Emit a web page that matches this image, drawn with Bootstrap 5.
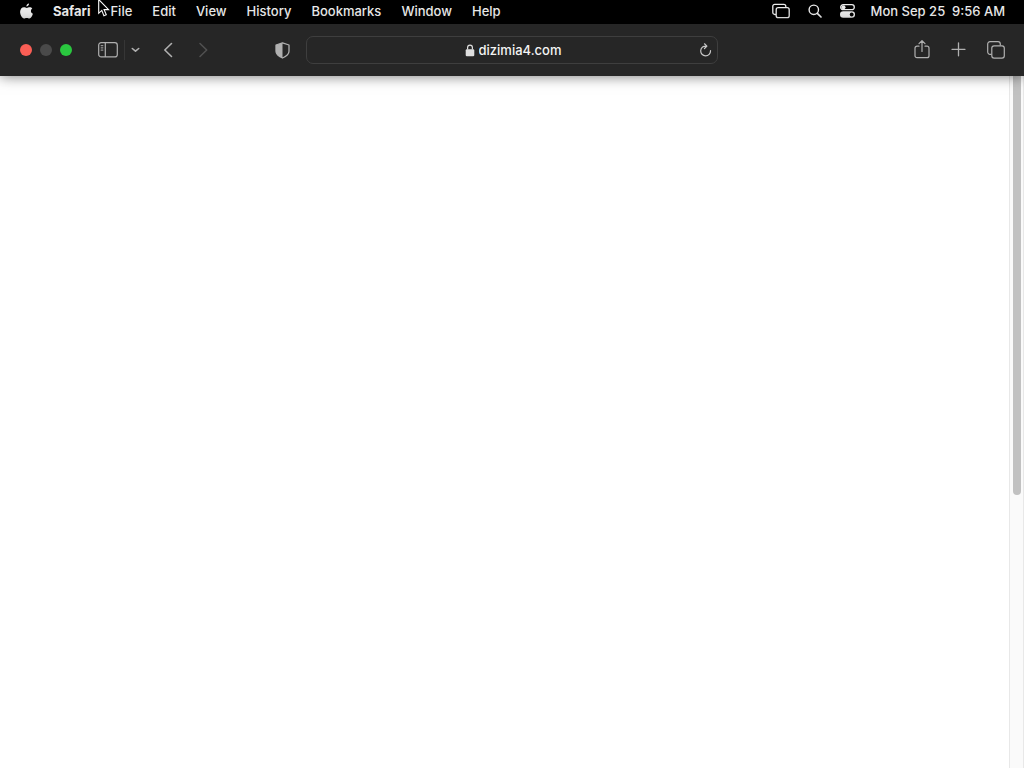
<!DOCTYPE html>
<html lang="en">
<head>
<meta charset="utf-8">
<meta name="viewport" content="width=device-width, initial-scale=1">
<title>Safari</title>
<link href="https://cdn.jsdelivr.net/npm/bootstrap@5.3.0/dist/css/bootstrap.min.css" rel="stylesheet">
<script src="https://cdn.jsdelivr.net/npm/bootstrap@5.3.0/dist/js/bootstrap.bundle.min.js" defer></script>
<style>
  body { font-family: Inter, "Liberation Sans", sans-serif; font-size: 13px; line-height: 16px; font-weight: 500; }
  svg { display: block; fill: none; flex: none; }
  .menubar { height: 24px; background: #000; color: #ececec; padding: 0 19px 2px 20px; }
  .menubar a, .menubar button { color: inherit; text-decoration: none; }
  .menus { gap: 20px; }
  .status { gap: 18px; }
  .plain { border: 0; background: none; padding: 0; color: inherit; }
  .toolbar { display: grid; grid-template-columns: 1fr minmax(0, 412px) 1fr; height: 52px; background: #262626; color: #b0b0b0; padding: 0 19px; box-shadow: 0 0 13px rgba(0, 0, 0, .55); z-index: 1; }
  .light { width: 12px; height: 12px; border-radius: 50%; }
  .lights { margin-left: 1px; }
  .light-close { background: #fa5e55; }
  .light-min { background: #4a4a4a; }
  .light-zoom { background: #2ac73f; }
  .side { gap: 6px; margin-left: 26px; }
  .rule { width: 1px; height: 20px; background: #363636; }
  .arrows { gap: 25px; margin-left: 23px; }
  .dim { color: #505050; }
  .privacy { margin-right: 16px; }
  .address { height: 28px; border: 1px solid #3e3e3e; border-radius: 7px; color: #f4f4f4; padding: 0 5px; }
  .url { width: 84px; padding: 0; border: 0; background: none; color: inherit; font: inherit; outline: 0; }
  .lock { margin-left: 16px; }
  .actions { gap: 21px; }
  .track { width: 15px; background: #fafafa; border: solid #e8e8e8; border-width: 0 1px; padding: 0 2px 0 3px; }
  .thumb { height: 60.5%; background: #c1c1c1; border-radius: 0 0 4px 4px; }
  .pointer { left: 98px; top: 0; }
</style>
</head>
<body class="d-flex flex-column vh-100 overflow-hidden bg-white">
  <header class="menubar d-flex align-items-center justify-content-between position-relative">
    <nav class="menus d-flex align-items-center" aria-label="Menu bar">
      <a href="#" aria-label="Apple menu"><svg width="13" height="16" viewBox="0 0 13 16"><path fill="currentColor" d="M9 .5c.1 1.600-1.100 3-2.600 3.100C6.200 2.100 7.500.700 9 .5zM12.300 5.600C10.300 6.900 10.500 9.800 12.900 10.800 12.200 13 10.900 15.500 9.500 15.500c-1.100 0-1.500-.6-2.800-.6s-1.700.6-2.700.6C2.200 15.500 .1 12 .1 9.100.1 6.200 1.800 4.200 3.900 4.200c1.200 0 2 .7 2.900.7.900 0 1.600-.7 3-.7 1 0 1.900.5 2.500 1.400z"/></svg></a>
      <a href="#" class="fw-bold">Safari</a>
      <a href="#">File</a>
      <a href="#">Edit</a>
      <a href="#">View</a>
      <a href="#">History</a>
      <a href="#">Bookmarks</a>
      <a href="#">Window</a>
      <a href="#">Help</a>
    </nav>
    <div class="d-flex align-items-center gap-3">
      <div class="status d-flex align-items-center">
        <button class="plain" aria-label="Stage windows"><svg width="18" height="16" viewBox="0 0 18 16" stroke="currentColor" stroke-width="1.300"><rect x="4.200" y="4.700" width="13" height="10" rx="2"/><path d="M4 11.500H2.800a2 2 0 0 1-2-2V3.300a2 2 0 0 1 2-2h9a2 2 0 0 1 2 2V4.500"/></svg></button>
        <button class="plain" aria-label="Search"><svg width="14" height="14" viewBox="0 0 14 14" stroke="currentColor" stroke-linecap="round"><circle cx="5.800" cy="5.800" r="4.700" stroke-width="1.400"/><path d="m9.300 9.300 3.700 3.700" stroke-width="1.700"/></svg></button>
        <button class="plain" aria-label="Control center"><svg width="15" height="14" viewBox="0 0 15 14"><rect x=".7" y=".7" width="13.600" height="5" rx="2.500" stroke="currentColor" stroke-width="1.300"/><circle cx="3.500" cy="3.200" r="2" fill="currentColor"/><rect x="0" y="7.300" width="15" height="6.500" rx="3.200" fill="currentColor"/><circle cx="11.700" cy="10.500" r="1.900" fill="#000"/></svg></button>
      </div>
      <time class="text-nowrap">Mon Sep 25&nbsp; 9:56 AM</time>
    </div>
    <svg class="pointer position-absolute" width="12" height="17" viewBox="0 0 12 17" aria-hidden="true"><path d="M.7-.5v13.800l3.100-2.900 2.100 5.300 2.400-1-2.200-5.100h4.500z" fill="#000" stroke="#fff" stroke-width="1.100"/></svg>
  </header>

  <div class="toolbar align-items-center position-relative">
    <div class="d-flex align-items-center">
      <div class="lights d-flex gap-2">
        <button class="plain light light-close" aria-label="Close"></button>
        <button class="plain light light-min" aria-label="Minimize"></button>
        <button class="plain light light-zoom" aria-label="Zoom"></button>
      </div>
      <div class="side d-flex align-items-center">
        <button class="plain" aria-label="Show sidebar"><svg width="20" height="16" viewBox="0 0 20 16" stroke="currentColor"><rect x=".7" y=".7" width="18.600" height="14.200" rx="2.500" stroke-width="1.200"/><path d="M7.300 1v14" stroke-width="1.200"/><path d="M2.700 3.700h2.600M2.700 5.900h2.600M2.700 8.100h2.600"/></svg></button>
        <div class="rule"></div>
        <button class="plain" aria-label="Tab groups"><svg width="9" height="6" viewBox="0 0 9 6" stroke="currentColor" stroke-width="1.600" stroke-linecap="round" stroke-linejoin="round"><path d="m1.300 1.500 3.200 2.700 3.200-2.700"/></svg></button>
      </div>
      <div class="arrows d-flex">
        <button class="plain" aria-label="Back"><svg width="10" height="16" viewBox="0 0 10 16" stroke="currentColor" stroke-width="1.600" stroke-linecap="round" stroke-linejoin="round"><path d="M8.500 1.500 1.800 8l6.700 6.500"/></svg></button>
        <button class="plain dim" aria-label="Forward"><svg width="10" height="16" viewBox="0 0 10 16" stroke="currentColor" stroke-width="1.600" stroke-linecap="round" stroke-linejoin="round"><path d="M2 1.500 8.700 8 2 14.500"/></svg></button>
      </div>
      <button class="plain privacy ms-auto" aria-label="Privacy report"><svg width="15" height="17" viewBox="0 0 15 17"><path d="M7.500.9 1 3v6.200c0 3 3 5.300 6.500 6.800C11 14.500 14 12.200 14 9.200V3z" stroke="currentColor" stroke-width="1.300" stroke-linejoin="round"/><path d="M7.500.9 1 3v6.200c0 3 3 5.300 6.500 6.800z" fill="currentColor"/></svg></button>
    </div>
    <div class="address d-flex align-items-center">
      <div class="d-flex align-items-center justify-content-center flex-grow-1 gap-1">
        <svg class="lock" width="10" height="13" viewBox="0 0 10 13"><rect x=".7" y="5.200" width="8.600" height="7" rx="1.200" fill="#dedede"/><path d="M2.600 5.500V3.600a2.400 2.400 0 0 1 4.800 0v1.900" stroke="#dedede" stroke-width="1.200"/></svg>
        <input class="url" type="text" value="dizimia4.com" aria-label="Address">
      </div>
      <button class="plain" aria-label="Reload"><svg width="13" height="14" viewBox="0 0 13 14" stroke="#c8c8c8" stroke-width="1.200" stroke-linecap="round" stroke-linejoin="round"><path d="M7.400 3.100a4.900 4.900 0 1 0 4.100 4.500M5.500.8l2.400 2.300-2.400 2.400"/></svg></button>
    </div>
    <div class="actions d-flex align-items-center justify-content-end">
      <button class="plain" aria-label="Share"><svg width="16" height="20" viewBox="0 0 16 20" stroke="currentColor" stroke-width="1.200" stroke-linecap="round" stroke-linejoin="round"><path d="M5 6.200H3a2 2 0 0 0-2 2v7.500a2 2 0 0 0 2 2h10a2 2 0 0 0 2-2V8.200a2 2 0 0 0-2-2h-2M8 11.500V.800M5 3.600l3-3 3 3"/></svg></button>
      <button class="plain" aria-label="New tab"><svg width="15" height="16" viewBox="0 0 15 16" stroke="currentColor" stroke-width="1.300" stroke-linecap="round"><path d="M7.500 .8v13M1 7.300h13"/></svg></button>
      <button class="plain" aria-label="Tab overview"><svg width="18" height="18" viewBox="0 0 18 18" stroke="currentColor" stroke-width="1.200"><rect x="4.800" y="4.800" width="12.500" height="12.300" rx="2.300"/><path d="M4.500 13.300H3a2.300 2.300 0 0 1-2.300-2.300V3A2.300 2.300 0 0 1 3 .7h8A2.300 2.300 0 0 1 13.300 3v1.500"/></svg></button>
    </div>
  </div>

  <main class="d-flex flex-grow-1">
    <div class="flex-grow-1"></div>
    <div class="track"><div class="thumb"></div></div>
  </main>
</body>
</html>
